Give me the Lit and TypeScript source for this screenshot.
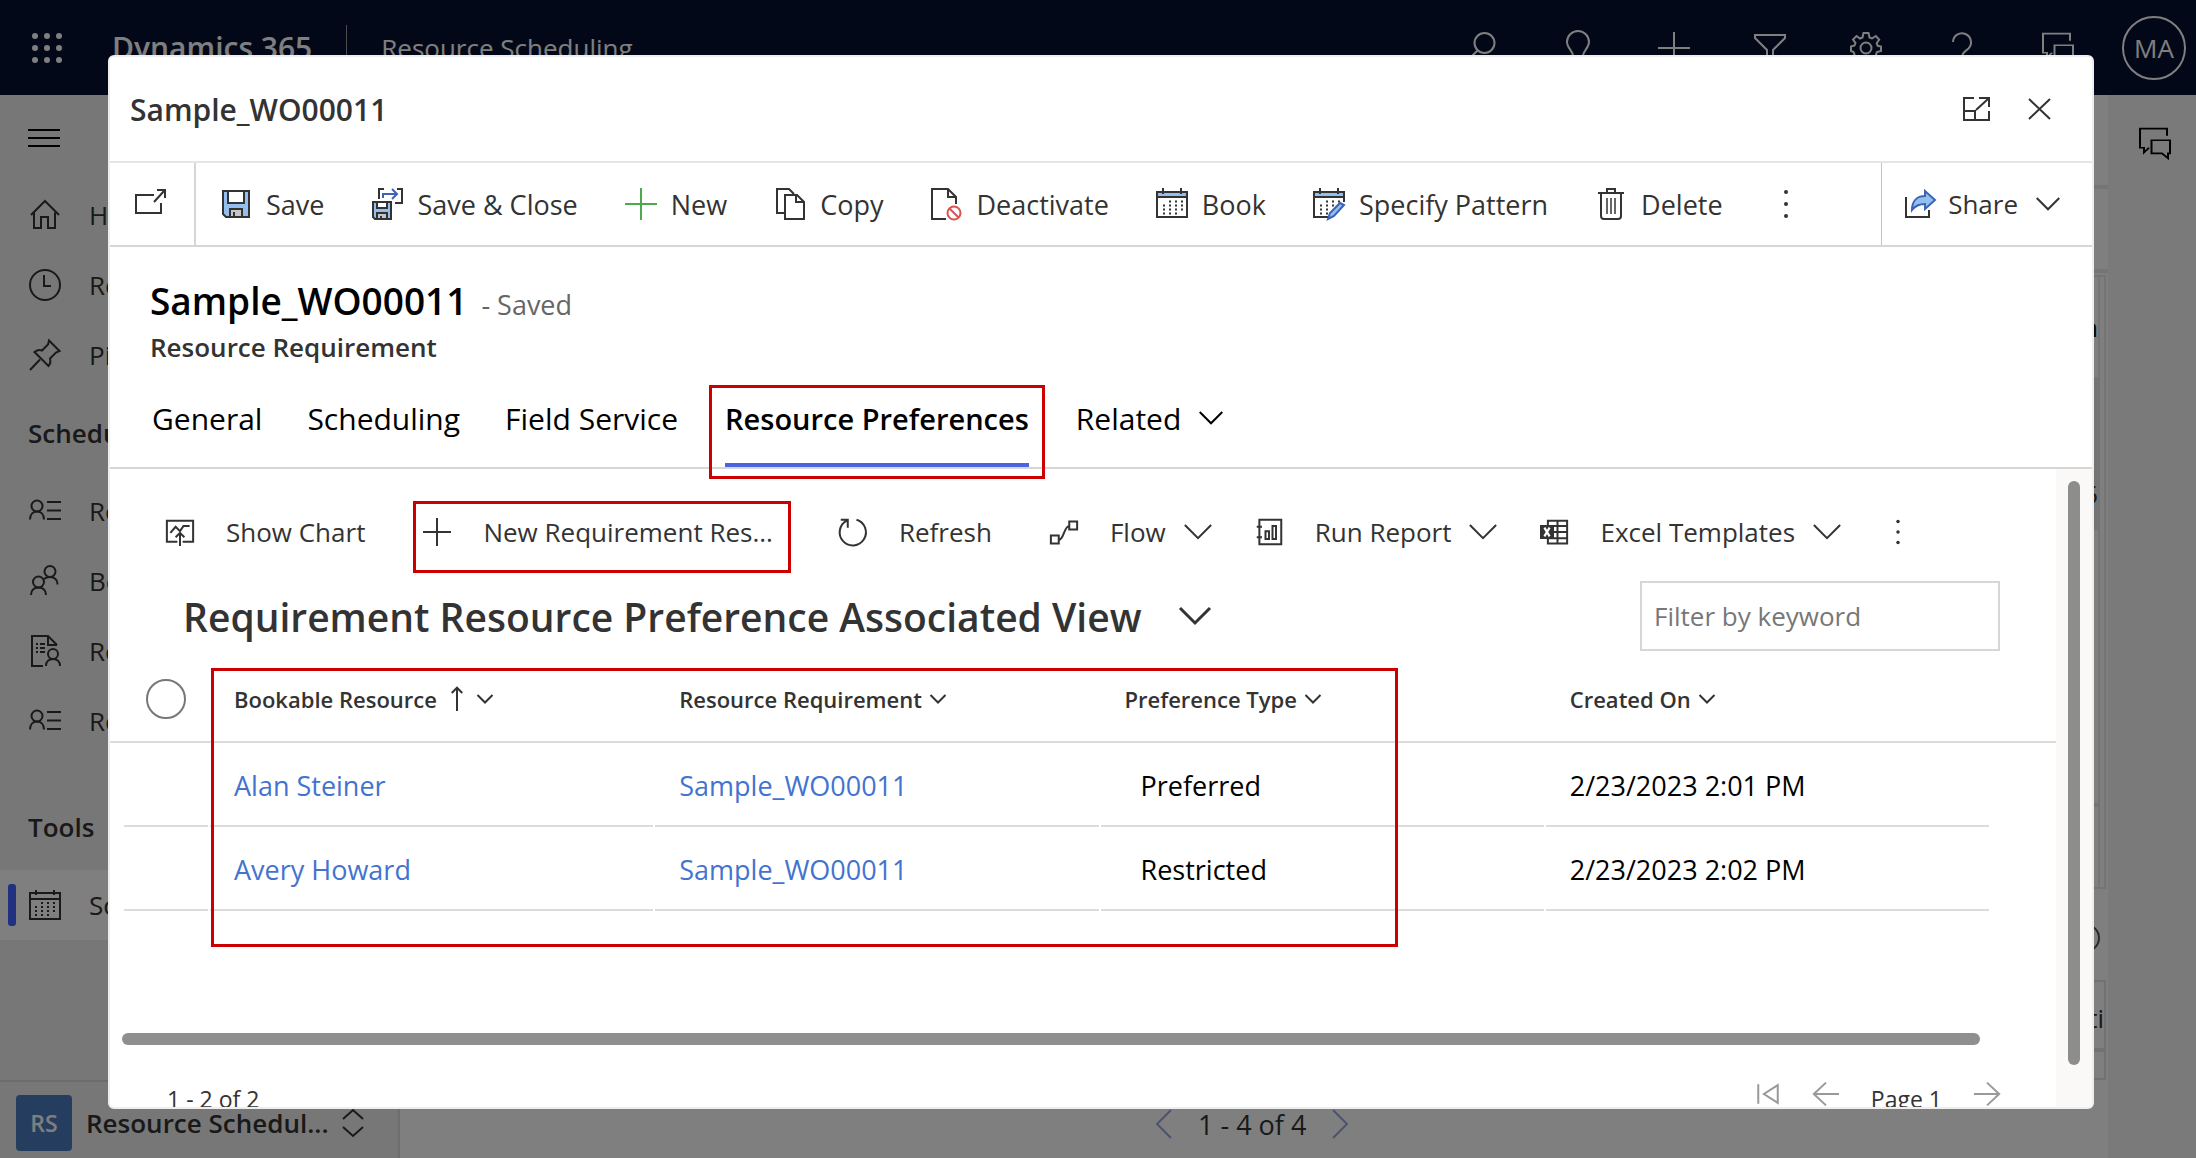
import { LitElement, html, css, svg, nothing } from "lit";
import { customElement, property, state } from "lit/decorators.js";

const shapes: Record<string, unknown> = {
  search: svg`<circle cx="18.5" cy="11" r="10"/><path d="M11.5 18.5 1 29"/>`,
  bulb: svg`<path d="M11 24c0-5-6-8-6-14a11 11 0 0 1 22 0c0 6-6 9-6 14zM11 28h10M12 31h8"/>`,
  plus: svg`<path d="M16 0v32M0 16h32"/>`,
  filter: svg`<path d="M1 3h30v3L19 18v13l-6-4V18L1 6z"/>`,
  gear: svg`<circle cx="16" cy="16" r="5.500"/><path d="M13.500 1h5l1 4.500 2.500 1 3.800-2.500 3.400 3.500-2.500 3.800 1 2.500L31 14.500v4.500l-4 1-1 2.500 2.400 3.700-3.500 3.500-3.700-2.400-2.500 1-1 3.700h-5l-1-3.700-2.500-1-3.600 2.400-3.500-3.500L4.500 22.500l-1-2.500L1 19v-4.500l3.500-1 1-2.500L3 7.500 6.500 4 10 6.500l2.500-1z"/>`,
  help: svg`<path d="M7 10a9 9 0 1 1 15.500 6.500C18.500 20 16 21 16 26M16 29v3"/>`,
  chat: svg`<path d="M28 11V2H1v24h4v6l5-6M12.500 16.500H31V33h-2v6l-6-6H12.500z" transform="scale(1 .8)"/>`,
  menu: svg`<path d="M0 8h32M0 16h32M0 24h32"/>`,
  home: svg`<path d="M2 16 16 2l14 14M5 13.500V29h7V18h7v11h7V13.500"/>`,
  clock: svg`<circle cx="16" cy="16" r="15"/><path d="M15 6v11h7"/>`,
  pin: svg`<path d="M20 1.500 30.500 12 27 13.500l-6 6c1 3 .5 5-1.500 7.500l-14-14c2.500-2 5-2.500 7.500-1.500l6-6zM11 20.500 1 31"/>`,
  people: svg`<circle cx="8" cy="11" r="5.500"/><path d="M1 24.500c0-5 3-8 7-8s7 3 7 8M18 7h14M18 15.500h14M18 24h14"/>`,
  pair: svg`<circle cx="21" cy="6.500" r="5.500"/><circle cx="9.500" cy="17" r="5.500"/><path d="M2 30c0-4.500 3-7.500 7.500-7.500S17 25.500 17 30M15 14c1.500-1.300 3.500-2 6-2 4.500 0 7.500 3 7.500 7.500"/>`,
  report: svg`<path d="M14 31H3V1h16l9 9M19 1v9h9M7 9h2M11 9h5M7 13h2M11 13h5M7 17h2M11 17h5"/><circle cx="24" cy="19" r="5"/><path d="M17 31c0-4.500 3-7 7-7s7 2.500 7 7"/>`,
  calendar: svg`<path d="M1 4h30v26H1zM1 10h30M7 1v5M25 1v5"/><path stroke-dasharray="2 4" d="M12 14h16M6 18h21M6 22h21M6 26h16"/>`,
  updown: svg`<path d="M6 12 16 3l10 9M6 20l10 9 10-9"/>`,
  popout: svg`<path d="M20 7H2v18h25V15M20 14 30 3M23 2h8v8"/>`,
  expand: svg`<path d="M14 5H4v22h25V18M4 18h11v9M19 5h10v9M28 6 16 17"/>`,
  close: svg`<path d="M5 6l21 20M26 6 5 26"/>`,
  save: svg`<path fill="#92bfee" d="M3 3h26v26H6l-3-3z"/><path fill="#fff" d="M8 3h16v12H8z"/><path fill="#c8c6c4" d="M10 21h12v8H10z"/><path d="M14 24v5"/>`,
  saveClose: svg`<path fill="#92bfee" d="M2 14h18v17H4l-2-2z"/><path fill="#fff" d="M6 14h10v6H6z"/><path fill="#c8c6c4" d="M6 25h10v6H6z"/><path d="M10 28v3M13 1H8v10M26 1h5v14h-7"/><path stroke="#3b63b8" d="M12 10V6h14M21 1l5 5-5 5"/>`,
  add: svg`<path stroke="#4ea84e" d="M16 0v32M0 16h32"/>`,
  copy: svg`<path d="M10 25H3V1h12l5 5"/><path fill="#fff" d="M11 7h12l7 7v17H11z"/><path d="M22 7v7h8"/>`,
  deactivate: svg`<path d="M16 31H2V1h16l8 8v7M18 1v8h8"/><circle cx="24" cy="25" r="6.500" stroke="#d9534f"/><path stroke="#d9534f" d="m19.500 20.500 9 9"/>`,
  book: svg`<path fill="#fff" d="M1 4h30v25H1z"/><path fill="#92bfee" d="M1 4h30v5H1z"/><path d="M7 0v6M25 0v6"/><path stroke-dasharray="2 4" d="M13 13.500h14M7 17.500h20M7 21.500h20M7 25.500h14"/>`,
  pattern: svg`<path d="M15 29H1V4h30v10"/><path fill="#92bfee" d="M1 4h30v5H1z"/><path d="M7 0v6M25 0v6"/><path stroke-dasharray="2 4" d="M13 13.500h14M7 17.500h16M7 21.500h12M7 25.500h9"/><path fill="#92bfee" stroke="#3b63b8" d="m27 15 4 2-10 11-6 3 2-6z"/>`,
  trash: svg`<path d="M6 5v23q0 3 3 3h14q3 0 3-3V5M3 5h26M12 5V1h8v4"/><path stroke-width="1.500" d="M12 10v16M16 10v16M20 10v16"/>`,
  share: svg`<path d="M2 9v20h23v-7"/><path fill="#92bfee" stroke="#3b63b8" d="M21 3l10 9-10 9v-5c-6 0-10 2-13 6 0-9 5-14 13-14z"/>`,
  more: svg`<g fill="#333" stroke="none"><circle cx="16" cy="4" r="2"/><circle cx="16" cy="16" r="2"/><circle cx="16" cy="28" r="2"/></g>`,
  chart: svg`<path d="M13 27H1V3h30v24H19M5 17l6-7 5 5 4-6h2l5 0M16 32V18M11 22l5-5 5 5"/>`,
  refresh: svg`<path d="M20 2A15 15 0 1 1 9 3M2 2h8v9"/>`,
  flow: svg`<path d="M1 20h9v9H1zM22 4h9v9h-9zM10 25c6 0 6-16 12-16"/>`,
  runReport: svg`<path d="M5 2h25v28H5zM2 10h6M2 22h6"/><path d="M12 15h4v9h-4zM20 9h4v15h-4z"/>`,
  excel: svg`<path d="M9 3h22v26H9zM9 9h22M9 16h22M9 23h22M20 3v26"/><path fill="#333" stroke="none" d="M0 8h16v16H0z"/><path stroke="#fff" stroke-width="2.500" d="m5 11 6 10M11 11 5 21"/>`,
  down: svg`<path d="m1 8 15 15L31 8"/>`,
  left: svg`<path d="M24 0 8 16l16 16"/>`,
  right: svg`<path d="m8 0 16 16L8 32"/>`,
  up: svg`<path d="M16 32V1M9 8l7-7 7 7"/>`,
  first: svg`<path d="M4 4v24M28 5v22L11 16z"/>`,
  prev: svg`<path d="M32 16H1M16 2 1 16l15 14"/>`,
  next: svg`<path d="M0 16h31M16 2l15 14-15 14"/>`,
};

@customElement("ui-icon")
class UiIcon extends LitElement {
  @property() name = "";
  @property({ type: Number }) size = 32;
  @property({ type: Number }) weight = 2;
  static styles = css`
    :host { display: inline-flex; flex: none; }
    svg { display: block; overflow: visible; }
  `;
  render() {
    const scaled = (this.weight * 32) / this.size;
    return html`<svg aria-hidden="true" width=${this.size} height=${this.size} viewBox="0 0 32 32"
      fill="none" stroke="currentColor" stroke-width=${scaled}>${shapes[this.name] ?? nothing}</svg>`;
  }
}

const shared = css`
  * { box-sizing: border-box; }
  button { font: inherit; color: inherit; background: none; border: 0; padding: 0; margin: 0; display: inline-flex; align-items: center; white-space: nowrap; }
  a { color: inherit; text-decoration: none; }
  h1, h2, h3, p { margin: 0; font-weight: 600; }
`;

@customElement("app-shell")
class AppShell extends LitElement {
  static styles = [shared, css`
    :host { display: flex; flex-direction: column; height: 100%; color: #333; font-size: 26px; }
    .top { flex: none; height: 95px; padding: 0 10px 0 32px; background: #061030; color: #fff; display: flex; align-items: center; }
    .waffle { display: grid; grid-template-columns: repeat(3, 6px); gap: 6px; }
    .waffle i { width: 6px; height: 6px; border-radius: 3px; background: #fff; }
    .brand { margin-left: 50px; font-size: 30px; font-weight: 600; }
    .rule { width: 1px; height: 45px; margin: 0 34px; background: #999; }
    .tools { margin-left: auto; display: flex; align-items: center; gap: 64px; }
    .avatar { width: 64px; height: 64px; margin-left: -16px; border: 2px solid #fff; border-radius: 50%; justify-content: center; }
    .body { flex: 1; min-height: 0; display: flex; }
    nav { width: 400px; flex: none; display: flex; flex-direction: column; background: #eee; border-right: 2px solid #ddd; }
    .burger { height: 85px; padding-left: 28px; flex: none; color: #000; }
    .item { height: 70px; flex: none; display: flex; align-items: center; gap: 28px; padding-left: 29px; }
    .group { height: 86px; flex: none; padding: 0 28px; line-height: 86px; font-size: 26px; }
    .gap { margin-top: 28px; }
    .current { background: #fff; padding-left: 8px; }
    .current::before { content: ""; width: 8px; height: 42px; border-radius: 3px; background: #4262ff; margin-right: -15px; }
    .area { margin-top: auto; height: 78px; flex: none; border-top: 2px solid #d8d8d8; display: flex; align-items: center; gap: 14px; padding: 6px 16px 0; font-weight: 600; white-space: nowrap; }
    .tile { width: 56px; height: 56px; border-radius: 4px; background: #4a7cc0; color: #fff; display: grid; place-items: center; font-size: 23px; }
    .area ui-icon { margin-left: -6px; }
    main { flex: 1; min-width: 0; display: flex; flex-direction: column; background: #fff; }
    .strip { height: 94px; flex: none; border-bottom: 4px solid #eaeaea; }
    .strip + .strip { height: 84px; }
    .board { height: 614px; flex: none; margin: 2px 2px 16px 0; border: 2px solid #e8e8e8; padding-right: 4px; display: flex; flex-direction: column; }
    .cell { display: flex; justify-content: flex-end; align-items: center; border-bottom: 4px solid #e8e8e8; border-right: 2px solid #e8e8e8; overflow: hidden; }
    .head { height: 104px; font-weight: 600; color: #111; }
    .grey { flex: 1; background: #e8e8e8; align-items: flex-end; padding-bottom: 14px; }
    .tall { height: 277px; }
    .short { height: 80px; border-bottom: 0; }
    .ring { width: 28px; height: 28px; border: 2px solid #555; border-radius: 50%; margin: 19px 8px 0 auto; flex: none; }
    .lower { height: 100px; flex: none; margin: 28px 2px 0 0; border: 2px solid #e4e4e4; }
    .lower p { height: 70px; border-bottom: 4px solid #e4e4e4; text-align: right; line-height: 72px; font-weight: 400; }
    .pager { margin-top: auto; height: 68px; display: flex; align-items: center; justify-content: flex-start; gap: 20px; padding-left: 750px; color: #333; font-size: 27px; }
    .pager button { color: #98a4e0; }
    aside { width: 88px; flex: none; background: #f5f5f5; color: #000; padding: 32px 0 0 31px; }
  `];
  private link(icon: string, label: string, current = false) {
    return html`<a class="item ${current ? "current" : ""}" href="#"><ui-icon name=${icon}></ui-icon>${label}</a>`;
  }
  render() {
    return html`
      <header class="top">
        <button class="waffle" aria-label="App launcher">${Array.from({ length: 9 }, () => html`<i></i>`)}</button>
        <span class="brand">Dynamics 365</span><span class="rule"></span><span>Resource Scheduling</span>
        <div class="tools">
          ${["search", "bulb", "plus", "filter", "gear", "help", "chat"].map((n) => html`<button aria-label=${n}><ui-icon name=${n}></ui-icon></button>`)}
          <button class="avatar" aria-label="Account">MA</button>
        </div>
      </header>
      <div class="body">
        <nav>
          <button class="burger" aria-label="Toggle navigation"><ui-icon name="menu"></ui-icon></button>
          ${this.link("home", "Home")}${this.link("clock", "Recent")}${this.link("pin", "Pinned")}
          <h3 class="group">Scheduling</h3>
          ${this.link("people", "Resources")}${this.link("pair", "Bookings")}${this.link("report", "Requirements")}${this.link("people", "Requests")}
          <h3 class="group gap">Tools</h3>
          ${this.link("calendar", "Schedule Board", true)}
          <button class="area"><span class="tile">RS</span>Resource Schedul...<ui-icon name="updown"></ui-icon></button>
        </nav>
        <main>
          <div class="strip"></div><div class="strip"></div>
          <div class="board">
            <div class="cell head">n</div><div class="cell grey">5</div><div class="cell tall"></div><div class="cell short"></div>
          </div>
          <div class="ring"></div>
          <div class="lower"><p>ti</p></div>
          <div class="pager">
            <button aria-label="Previous"><ui-icon name="left" size="28"></ui-icon></button><span>1 - 4 of 4</span>
            <button aria-label="Next"><ui-icon name="right" size="28"></ui-icon></button>
          </div>
        </main>
        <aside><button aria-label="Conversations"><ui-icon name="chat"></ui-icon></button></aside>
      </div>`;
  }
}

interface Row { resource: string; requirement: string; type: string; created: string; }

@customElement("record-dialog")
class RecordDialog extends LitElement {
  @state() private rows: Row[] = [
    { resource: "Alan Steiner", requirement: "Sample_WO00011", type: "Preferred", created: "2/23/2023 2:01 PM" },
    { resource: "Avery Howard", requirement: "Sample_WO00011", type: "Restricted", created: "2/23/2023 2:02 PM" },
  ];
  static styles = [shared, css`
    :host { display: flex; flex-direction: column; background: #fff; color: #333; border: 2px solid #eee; border-radius: 6px; overflow: hidden; font-size: 26px; }
    .title { flex: none; height: 106px; border-bottom: 2px solid #e5e5e5; display: flex; align-items: center; padding: 0 36px 0 20px; }
    .title h1 { flex: 1; font-size: 30px; }
    .title button + button { margin-left: 32px; }
    .commands { flex: none; height: 84px; border-bottom: 2px solid #d6d6d6; display: flex; font-size: 27px; }
    .pop { width: 86px; justify-content: center; border-right: 2px solid #d6d6d6; padding-right: 4px; }
    .list { flex: 1; display: flex; gap: 47px; padding-left: 24px; }
    .list button { gap: 14px; }
    .share { border-left: 1px solid #c4c4c4; padding: 0 32px 0 22px; font-size: 26px; gap: 12px; }
    .share ui-icon + ui-icon { margin-left: 6px; }
    .record { flex: none; padding: 28px 40px 6px; }
    .record h2 { display: flex; align-items: baseline; gap: 14px; height: 52px; font-size: 37px; line-height: 52px; color: #000; }
    .record h2 span { font-size: 27px; font-weight: 400; color: #666; }
    .record p { line-height: 40px; }
    .tabs { flex: none; height: 96px; border-bottom: 2px solid #d6d6d6; padding-left: 42px; display: flex; gap: 45px; font-size: 30px; color: #000; }
    .tabs button { border-bottom: 4px solid transparent; gap: 18px; }
    .tabs .active { position: relative; border-color: #4a64e0; font-size: 29px; font-weight: 600; margin: 0 2px; }
    .mark::after { content: ""; position: absolute; box-sizing: border-box; border: 3px solid #c00; pointer-events: none; }
    .tabs .mark::after { inset: 12px -16px -16px; }
    .pane { flex: 1; min-height: 0; display: flex; }
    .content { flex: 1; min-width: 0; display: flex; flex-direction: column; overflow: hidden; }
    .track { width: 36px; flex: none; background: #faf9f8; padding: 12px 12px 42px; display: flex; }
    .track i { flex: 1; border-radius: 6px; background: #8d8d8b; }
    .bar { flex: none; height: 62px; margin: 32px 0 18px; padding-left: 56px; display: flex; gap: 58px; }
    .bar button { gap: 32px; }
    .bar .drop { gap: 18px; margin-right: -15px; }
    .bar .drop ui-icon:first-child { margin-right: 14px; }
    .bar .mark { position: relative; margin-right: 8px; }
    .bar .mark::after { inset: 0 -18px -10px -10px; }
    .view { flex: none; height: 70px; display: flex; align-items: center; justify-content: space-between; padding: 0 56px 0 73px; }
    .view button { font-size: 39px; font-weight: 600; gap: 38px; }
    .view input { width: 360px; height: 70px; border: 2px solid #d6d6d6; padding: 0 12px; font: inherit; color: #333; background: #fff; }
    .view input::placeholder { color: #777; opacity: 1; }
    .grid { flex: 1; min-height: 0; position: relative; }
    .grid.mark::after { left: 101px; top: 17px; width: 61%; height: 279px; }
    table { width: 100%; table-layout: fixed; border-collapse: separate; border-spacing: 0; }
    th { height: 92px; padding: 6px 0 0 24px; border-bottom: 2px solid #dcdcdc; text-align: left; font-size: 22px; font-weight: 600; }
    th button { gap: 8px; }
    td { height: 84px; padding: 0 0 0 24px; color: #000; font-size: 27px; background: linear-gradient(#dcdcdc, #dcdcdc) left bottom / calc(100% - 2px) 2px no-repeat; }
    td:first-child { background-position: right 2px bottom; background-size: calc(100% - 16px) 2px; }
    td:last-child { background: none; }
    td.indent { padding-left: 40px; }
    td a { color: #4373d0; }
    .narrow { width: 100px; }
    .end { width: 65px; }
    th:first-child { padding-left: 36px; }
    th input { appearance: none; display: block; width: 40px; height: 40px; margin: 0; border: 2px solid #777; border-radius: 50%; }
    .hscroll { flex: none; height: 12px; margin: 0 76px 0 12px; border-radius: 6px; background: #8f8f8f; }
    .foot { flex: none; height: 62px; padding: 30px 56px 0 57px; display: flex; justify-content: space-between; align-items: flex-start; line-height: 48px; font-size: 23px; }
    .pages { display: flex; align-items: flex-start; gap: 32px; }
    .pages button { color: #999; height: 38px; }
  `];
  private command(icon: string, label: string) {
    return html`<button><ui-icon name=${icon}></ui-icon>${label}</button>`;
  }
  private tool(icon: string, label: string, drop = false) {
    return html`<button class=${drop ? "drop" : ""}><ui-icon name=${icon} size="28"></ui-icon>${label}${drop ? html`<ui-icon name="down" size="28"></ui-icon>` : nothing}</button>`;
  }
  private head(label: string, sorted = false) {
    return html`<th scope="col"><button>${label}${sorted ? html`<ui-icon name="up" size="24"></ui-icon>` : nothing}<ui-icon name="down" size="16"></ui-icon></button></th>`;
  }
  render() {
    return html`
      <header class="title"><h1>Sample_WO00011</h1>
        <button aria-label="Expand"><ui-icon name="expand"></ui-icon></button>
        <button aria-label="Close"><ui-icon name="close"></ui-icon></button>
      </header>
      <div class="commands">
        <button class="pop" aria-label="Open in new window"><ui-icon name="popout"></ui-icon></button>
        <div class="list">
          ${this.command("save", "Save")}${this.command("saveClose", "Save & Close")}${this.command("add", "New")}${this.command("copy", "Copy")}
          ${this.command("deactivate", "Deactivate")}${this.command("book", "Book")}${this.command("pattern", "Specify Pattern")}${this.command("trash", "Delete")}
          <button aria-label="More commands"><ui-icon name="more"></ui-icon></button>
        </div>
        <button class="share"><ui-icon name="share"></ui-icon>Share<ui-icon name="down" size="24"></ui-icon></button>
      </div>
      <div class="record"><h2>Sample_WO00011<span>- Saved</span></h2><p>Resource Requirement</p></div>
      <div class="tabs" role="tablist">
        <button role="tab">General</button><button role="tab">Scheduling</button><button role="tab">Field Service</button>
        <button role="tab" aria-selected="true" class="active mark">Resource Preferences</button>
        <button role="tab">Related<ui-icon name="down" size="24"></ui-icon></button>
      </div>
      <div class="pane">
        <div class="content">
          <div class="bar">
            ${this.tool("chart", "Show Chart")}
            <button class="mark"><ui-icon name="plus" size="28"></ui-icon>New Requirement Res...</button>
            ${this.tool("refresh", "Refresh")}${this.tool("flow", "Flow", true)}${this.tool("runReport", "Run Report", true)}${this.tool("excel", "Excel Templates", true)}
            <button aria-label="More actions"><ui-icon name="more" size="28"></ui-icon></button>
          </div>
          <div class="view">
            <button>Requirement Resource Preference Associated View<ui-icon name="down" size="32" weight="3"></ui-icon></button>
            <input type="text" aria-label="Filter by keyword" placeholder="Filter by keyword" />
          </div>
          <div class="grid mark">
            <table>
              <colgroup><col class="narrow" /><col /><col /><col /><col /><col class="end" /></colgroup>
              <thead><tr>
                <th><input type="checkbox" aria-label="Select all rows" /></th>
                ${this.head("Bookable Resource", true)}${this.head("Resource Requirement")}${this.head("Preference Type")}${this.head("Created On")}<th></th>
              </tr></thead>
              <tbody>${this.rows.map((r) => html`<tr>
                <td></td><td><a href="#">${r.resource}</a></td><td><a href="#">${r.requirement}</a></td>
                <td class="indent">${r.type}</td><td>${r.created}</td><td></td></tr>`)}</tbody>
            </table>
          </div>
          <div class="hscroll"></div>
          <div class="foot"><span>1 - 2 of 2</span>
            <div class="pages">
              <button aria-label="First page"><ui-icon name="first" size="26"></ui-icon></button>
              <button aria-label="Previous page"><ui-icon name="prev" size="26"></ui-icon></button>
              <span>Page 1</span>
              <button aria-label="Next page"><ui-icon name="next" size="26"></ui-icon></button>
            </div>
          </div>
        </div>
        <div class="track"><i></i></div>
      </div>`;
  }
}

@customElement("app-root")
class AppRoot extends LitElement {
  static styles = css`
    :host { display: block; position: relative; height: 100vh; overflow: hidden; font-family: "Open Sans", "Noto Sans", sans-serif; }
    .veil { position: absolute; inset: 0; background: rgba(0, 0, 0, 0.5); }
    record-dialog { position: absolute; inset: 55px 102px 49px 108px; }
  `;
  render() {
    return html`<app-shell></app-shell><div class="veil"></div><record-dialog role="dialog" aria-label="Sample_WO00011"></record-dialog>`;
  }
}
